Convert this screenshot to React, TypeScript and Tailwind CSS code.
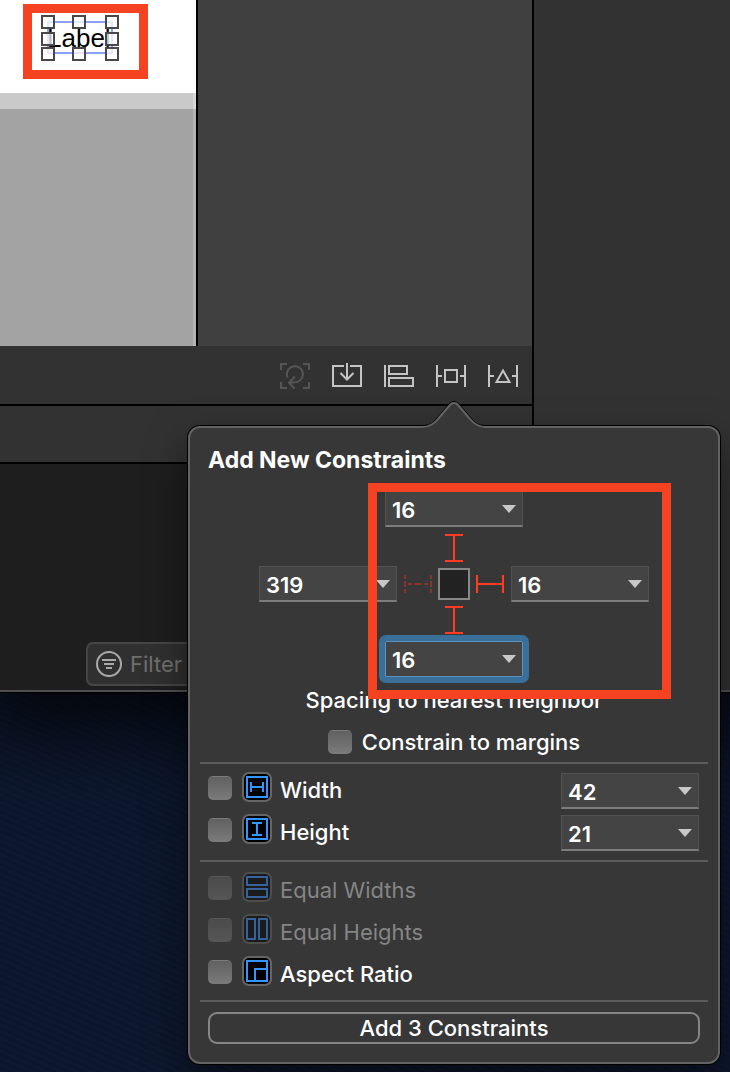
import React from "react";

const ICON = "block h-[30px] w-[30px] shrink-0";

function RefreshIcon() {
  return (
    <svg className={ICON} viewBox="0 0 30 30" fill="none" stroke="#555555" strokeWidth="2">
      <path d="M1 9V3H7M23 3H29V9M29 21V27H23M7 27H1V21" />
      <path d="M7.600 16.500A8 8 0 1 1 19.500 19.800C17 21.500 14 21.700 10 21.700M15 15.500L9 21.700L14.500 27.500" />
    </svg>
  );
}

function EmbedIcon() {
  return (
    <svg className={ICON} viewBox="0 0 30 30" fill="none" stroke="#c4c4c4" strokeWidth="2">
      <path d="M12 5H1V25H29V5H18" />
      <path d="M15 2V18M8.500 12L15 18.500L21.500 12" />
    </svg>
  );
}

function AlignIcon() {
  return (
    <svg className={ICON} viewBox="0 0 30 30" fill="none" stroke="#c4c4c4" strokeWidth="2">
      <path d="M1 4V26M5 5H23V13H5ZM5 17H29V25H5Z" />
    </svg>
  );
}

function PinIcon() {
  return (
    <svg className={ICON} viewBox="0 0 30 30" fill="none" stroke="#c4c4c4" strokeWidth="2">
      <path d="M1 4V26M29 4V26M1 15H6M24 15H29M9 9H21V21H9Z" />
    </svg>
  );
}

function ResolveIcon() {
  return (
    <svg className={ICON} viewBox="0 0 30 30" fill="none" stroke="#c4c4c4" strokeWidth="2">
      <path d="M1 4V26M29 4V26M1 15H6M24 15H29M15 9.500L21.500 21H8.500Z" />
    </svg>
  );
}

function SelectedLabel() {
  const xs = [42, 73, 106];
  const ys = [16, 33, 48];
  return (
    <div className="relative h-[93px] bg-white">
      <span className="absolute left-[47px] top-[22px] font-['Liberation_Sans',sans-serif] text-[26px] leading-[32px] text-black">
        Label
      </span>
      <svg className="absolute left-0 top-0 h-[93px] w-[160px]" viewBox="0 0 160 93" fill="none">
        <rect x="48" y="22" width="64" height="31" stroke="#8ea0ff" strokeWidth="2" />
        {ys.map((y) =>
          xs.map((x) =>
            x === 73 && y === 33 ? null : (
              <rect
                key={`${x}-${y}`}
                x={x}
                y={y}
                width="12"
                height="12"
                fill="#ffffff"
                fillOpacity="0.75"
                stroke="#484848"
                strokeWidth="2"
              />
            ),
          ),
        )}
      </svg>
      <div className="absolute left-[23px] top-1 h-[75px] w-[125px] border-[9px] border-[#f54322]" />
    </div>
  );
}

function Combo({ label, value, focused = false }: { label: string; value: string; focused?: boolean }) {
  return (
    <div
      className={
        "flex h-9 w-[138px] shrink-0 items-center border bg-[#444444] " +
        (focused
          ? "rounded-[1px] border-[#5a92c0] outline-[6px] outline-[#396f99]"
          : "border-[#525252] border-b-2 border-b-[#7d7d7d]")
      }
    >
      <input
        aria-label={label}
        defaultValue={value}
        className="min-w-0 flex-1 bg-transparent pl-[6px] pt-[2px] text-[22px] font-semibold leading-7 text-white outline-none"
      />
      <button type="button" aria-label={`${label} options`} className="flex h-full w-5 items-center">
        <svg className="h-2 w-[14px]" viewBox="0 0 14 8">
          <path d="M0 0H14L7 8Z" fill="#c8c8c8" />
        </svg>
      </button>
    </div>
  );
}

function VerticalStrut() {
  return (
    <svg className="block h-7 w-[18px]" viewBox="0 0 18 28" fill="none" stroke="#ff3b22" strokeWidth="2">
      <path d="M0 1H18M9 1V27M0 27H18" />
    </svg>
  );
}

function HorizontalStrut({ active }: { active: boolean }) {
  return active ? (
    <svg className="block h-[18px] w-7" viewBox="0 0 28 18" fill="none" stroke="#ff3b22" strokeWidth="2">
      <path d="M1 0V18M1 9H27M27 0V18" />
    </svg>
  ) : (
    <svg className="block h-[18px] w-7" viewBox="0 0 28 18" fill="none" stroke="#84352c" strokeWidth="2">
      <path d="M1 0V4M1 6V12M1 14V18M27 0V4M27 6V12M27 14V18M4 9H8M10 9H18M20 9H24" />
    </svg>
  );
}

function Tick({ id, disabled = false }: { id: string; disabled?: boolean }) {
  return (
    <input
      id={id}
      type="checkbox"
      disabled={disabled}
      className="block h-6 w-6 shrink-0 appearance-none rounded-[5px] border-t border-[#7c7c7c] bg-linear-to-b from-[#616161] to-[#7b7b7b] checked:from-[#2f7de0] checked:to-[#1d63c4] disabled:border-[#585858] disabled:from-[#4b4b4b] disabled:to-[#565656]"
    />
  );
}

const GLYPHS = {
  width: "M1 1H21V21H1ZM5 6V16M17 6V16M5 11H17",
  height: "M1 1H21V21H1ZM6 5H16M6 17H16M11 5V17",
  equalWidths: "M1 1H21V9H1ZM1 13H21V21H1Z",
  equalHeights: "M1 1H9V21H1ZM13 1H21V21H13Z",
  aspect: "M1 1H21V21H1ZM9 21V9H21",
};

function ConstraintRow({
  id,
  label,
  glyph,
  disabled = false,
  value,
}: {
  id: string;
  label: string;
  glyph: keyof typeof GLYPHS;
  disabled?: boolean;
  value?: string;
}) {
  return (
    <div className="flex h-[42px] items-center justify-between">
      <div className="flex h-full items-center pb-[6px]">
        <Tick id={id} disabled={disabled} />
        <div
          className={
            "mb-[2px] ml-[10px] flex h-[30px] w-[30px] items-center justify-center rounded-[7px] border-2 " +
            (disabled ? "border-[#4d4d4d] bg-[#1b1b1b]" : "border-[#666666] bg-black")
          }
        >
          <svg
            className="block h-[22px] w-[22px] shrink-0"
            viewBox="0 0 22 22"
            fill="none"
            stroke={disabled ? "#356299" : "#3395ff"}
            strokeWidth="2"
          >
            <path d={GLYPHS[glyph]} />
          </svg>
        </div>
        <label
          htmlFor={id}
          className={
            "ml-2 pt-1 text-[22px] leading-7 " +
            (disabled ? "text-[#858585]" : "font-medium text-white")
          }
        >
          {label}
        </label>
      </div>
      {value && <Combo label={`${label} value`} value={value} />}
    </div>
  );
}

function Divider() {
  return <hr className="mx-[10px] h-[2px] border-0 bg-[#5c5c5c]" />;
}

function ConstraintsPopover() {
  return (
    <section
      aria-labelledby="popover-title"
      className="absolute right-[10px] top-[426px] w-full max-w-[532px] rounded-xl border-2 border-[#636363] bg-[#373737] shadow-[0_0_0_1px_#000000,0_18px_40px_rgba(0,0,0,0.5)]"
    >
      <svg
        className="absolute -top-7 left-1/2 h-[30px] w-[64px] -translate-x-1/2"
        viewBox="0 0 64 30"
        fill="none"
      >
        <path d="M0 30V27C8 27 12 24 16 19L28 5Q32 1 36 5L48 19C52 24 56 27 64 27V30Z" fill="#373737" />
        <path d="M0 25.500C8 25.500 11 23 15 18L27 4Q32 -1 37 4L49 18C53 23 56 25.500 64 25.500" stroke="#000000" strokeWidth="1" />
        <path d="M0 27C8 27 12 24 16 19L28 5Q32 1 36 5L48 19C52 24 56 27 64 27" stroke="#636363" strokeWidth="2" />
      </svg>
      <h1 id="popover-title" className="pl-[18px] pt-[18px] text-[23px] font-bold leading-7 text-white">
        Add New Constraints
      </h1>
      <div className="relative mt-[17px]">
        <div className="flex flex-col items-center">
          <Combo label="Top spacing" value="16" />
          <div className="mb-1 mt-[7px]">
            <VerticalStrut />
          </div>
          <div className="flex items-center gap-[7px]">
            <Combo label="Leading spacing" value="319" />
            <div className="flex items-center gap-[6px]">
              <HorizontalStrut active={false} />
              <div className="h-8 w-8 border-2 border-[#888888] bg-[#222222]" />
              <HorizontalStrut active />
            </div>
            <Combo label="Trailing spacing" value="16" />
          </div>
          <div className="mb-[7px] mt-1">
            <VerticalStrut />
          </div>
          <Combo label="Bottom spacing" value="16" focused />
        </div>
        <p className="mt-[9px] text-center text-[22px] font-medium leading-7 text-white">
          Spacing to nearest neighbor
        </p>
        <div className="pointer-events-none absolute -top-2 left-1/2 -ml-[86px] h-[216px] w-[303px] border-[9px] border-[#f54322]" />
      </div>
      <div className="mt-[14px] flex items-center justify-center gap-[10px] pb-[6px]">
        <Tick id="margins" />
        <label htmlFor="margins" className="text-[22px] font-medium leading-7 text-white">
          Constrain to margins
        </label>
      </div>
      <Divider />
      <div className="py-[6px] pl-[18px] pr-[19px]">
        <ConstraintRow id="width" label="Width" glyph="width" value="42" />
        <ConstraintRow id="height" label="Height" glyph="height" value="21" />
      </div>
      <Divider />
      <div className="pb-1 pl-[18px] pr-[19px] pt-2">
        <ConstraintRow id="equal-widths" label="Equal Widths" glyph="equalWidths" disabled />
        <ConstraintRow id="equal-heights" label="Equal Heights" glyph="equalHeights" disabled />
        <ConstraintRow id="aspect" label="Aspect Ratio" glyph="aspect" />
      </div>
      <Divider />
      <div className="px-[18px] pb-[18px] pt-[10px]">
        <button
          type="button"
          className="flex h-8 w-full items-center justify-center rounded-[9px] border-2 border-[#858585] text-[22px] font-medium leading-7 text-white"
        >
          Add 3 Constraints
        </button>
      </div>
    </section>
  );
}

export default function App() {
  return (
    <main className="relative min-h-screen overflow-hidden bg-[#0e1930] bg-[repeating-linear-gradient(204deg,rgba(0,0,0,0.14)_0px,rgba(0,0,0,0)_3px,rgba(0,0,0,0.14)_6px)] font-['Inter',sans-serif]">
      <div className="flex h-[692px] border-b-2 border-[#505050] shadow-[0_1px_0_#000000,0_20px_70px_20px_rgba(0,0,0,0.75)]">
        <div className="flex min-w-0 flex-1 flex-col">
          <div className="flex h-[346px] bg-[#404040]">
            <div className="w-[198px] border-r-2 border-black bg-[#a3a3a3]">
              <SelectedLabel />
              <div className="h-4 border-r-[3px] border-[#d8d8d8] bg-[#c9c9c9]" />
              <div className="h-[237px] border-r-[3px] border-[#b4b4b4]" />
            </div>
          </div>
          <div className="flex h-[60px] items-center justify-end gap-[22px] border-b-2 border-black bg-[#323232] pr-[14px] pt-[2px]">
            <button type="button" aria-label="Update frames" disabled>
              <RefreshIcon />
            </button>
            <button type="button" aria-label="Embed in">
              <EmbedIcon />
            </button>
            <button type="button" aria-label="Align">
              <AlignIcon />
            </button>
            <button type="button" aria-label="Add new constraints">
              <PinIcon />
            </button>
            <button type="button" aria-label="Resolve auto layout issues">
              <ResolveIcon />
            </button>
          </div>
          <div className="h-[58px] border-b-2 border-black bg-[#323232]" />
          <div className="flex flex-1 items-end bg-[#1e1e1e] pb-1 pl-[86px] pr-3">
            <div className="flex h-11 flex-1 items-center gap-[6px] rounded-[7px] border-2 border-[#464646] bg-[#303030] pl-2">
              <svg className="h-7 w-7 shrink-0" viewBox="0 0 28 28" fill="none" stroke="#a9a9a9" strokeWidth="2">
                <circle cx="13" cy="14" r="12" />
                <path d="M6 10H20M8 14H18M10 18H16" />
              </svg>
              <input
                type="text"
                aria-label="Filter"
                placeholder="Filter"
                className="min-w-0 flex-1 bg-transparent text-[22px] leading-7 outline-none placeholder:text-[#707070]"
              />
            </div>
          </div>
        </div>
        <aside className="w-[198px] border-l-2 border-black bg-[#323232]" />
      </div>
      <ConstraintsPopover />
    </main>
  );
}
